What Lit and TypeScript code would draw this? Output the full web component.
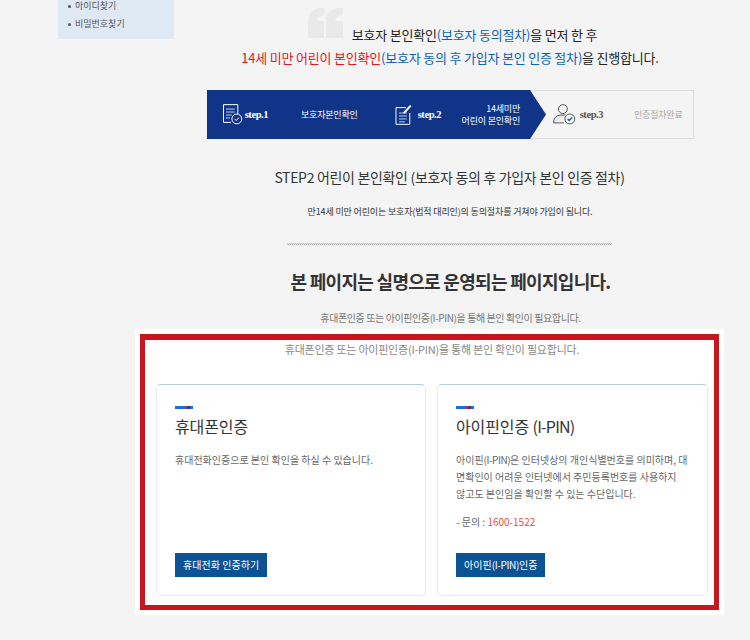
import { LitElement, html, css } from "lit";
import { customElement } from "lit/decorators.js";

@customElement("app-root")
export class AppRoot extends LitElement {
  static styles = css`
    :host {
      display: block;
      height: 640px;
      overflow: hidden;
      background: #f4f4f4;
      font-family: "Noto Sans CJK KR", "Noto Sans", sans-serif;
      color: #333;
    }
    .top { display: flex; padding-left: 58px; height: 329px; }
    .side {
      width: 116px; height: 39px; background: #dfe9f4; box-sizing: border-box;
      margin: 0; padding: 0 0 0 11px; list-style: none; flex: none;
      font-size: 9px; color: #555; line-height: 18px;
    }
    .side li { display: flex; align-items: center; gap: 4px; height: 18px; }
    .side li:first-child { margin-top: -4px; padding-top: 1px; }
    .side i { width: 3px; height: 3px; border-radius: 50%; background: #555; display: block; margin-left: -1px; }
    .main { width: 487px; margin-left: 33px; flex: none; display: flex; flex-direction: column; align-items: center; }
    .intro { font-size: 13px; line-height: 23px; color: #222; text-align: center; margin-top: 23px; white-space: nowrap; letter-spacing: -0.2px; width: 487px; height: 68px; flex: none; padding-right: 1px; box-sizing: border-box; }
    .intro div { height: 23px; }
    .intro .l1 { padding-left: 5px; }
    .q { display: inline-block; width: 35px; height: 23px; margin-right: 9px; position: relative; vertical-align: top; }
    .q svg { position: absolute; left: 0; top: -15px; }
    .blue { color: #0b62b8; }
    .red { color: #e8141c; }
    .steps {
      width: 487px; height: 49px; box-sizing: border-box; border: 1px solid #dcdcdc; margin-top: -1px; flex: none;
      display: flex; align-items: center; position: relative; background: #f4f4f4;
    }
    .bandbg { position: absolute; left: -1px; top: -1px; }
    .stepa { display: flex; align-items: center; flex: none; position: relative; }
    .st { font-family: "Liberation Serif", serif; font-size: 10.5px; font-weight: bold; letter-spacing: -0.45px; }
    .lbl { font-size: 9px; line-height: 12px; white-space: nowrap; letter-spacing: -0.2px; position: relative; flex: none; }
    .white { color: #fff; }
    .s1 { margin-left: 15px; width: 45px; gap: 2px; }
    .s1l { margin-left: 33px; width: 57px; }
    .s2 { margin-left: 37px; width: 46px; gap: 5px; }
    .s2l { width: 79px; text-align: right; }
    .s3 { margin-left: 33px; width: 50px; gap: 4px; color: #555; }
    .s3l { margin-left: 31px; color: #a8a8a8; }
    .title { font-size: 14px; letter-spacing: -0.32px; color: #333; margin-top: 27px; line-height: 22px; white-space: nowrap; padding-right: 2px; }
    .sub { font-size: 9px; color: #333; margin-top: 17px; line-height: 14px; white-space: nowrap; letter-spacing: -0.15px; padding-right: 1px; }
    .wave {
      width: 325px; height: 3px; margin-top: 24px; flex: none; margin-right: 2px;
      background:
        repeating-linear-gradient(90deg, #c4c4c4 0 1px, #e2e2e2 1px 2px) 0 0 / 100% 1px no-repeat,
        repeating-linear-gradient(90deg, #e0e0e0 0 1px, #a4a4a4 1px 2px) 0 1px / 100% 1px no-repeat,
        repeating-linear-gradient(90deg, #e8e8e8 0 1px, #f0f0f0 1px 2px) 0 2px / 100% 1px no-repeat;
    }
    .big { font-size: 18px; font-weight: bold; color: #333; margin-top: 22px; line-height: 26px; white-space: nowrap; letter-spacing: -0.7px; }
    .note { font-size: 10px; color: #777; margin-top: 16px; line-height: 16px; white-space: nowrap; letter-spacing: -0.4px; }
    .panel { margin-left: 135px; width: 589px; height: 286px; background: #fff; padding: 5px; box-sizing: border-box; }
    .frame { height: 100%; border: 5px solid #c8161e; border-top-width: 6px; box-sizing: border-box; padding: 0 6px 0 11px; }
    .cap { font-size: 11px; color: #888; text-align: center; line-height: 16px; margin-top: 1px; white-space: nowrap; letter-spacing: -0.23px; }
    .cards { display: grid; grid-template-columns: 270px 271px; gap: 11px; margin-top: 27px; }
    .card {
      height: 212px; box-sizing: border-box; border: 1px solid #e8ebef; border-top-color: #b9c9dc; border-radius: 5px;
      padding: 21px 18px 18px; display: flex; flex-direction: column; background: #fff;
    }
    .acc { width: 18px; height: 3px; background: linear-gradient(100deg, #1a6fe0 0 58%, #c8202c 58% 72%, #1a3f90 72% 84%, #1a6fe0 84%); }
    h3 { margin: 5px 0 0; font-size: 16px; font-weight: 400; color: #333; line-height: 24px; letter-spacing: -0.1px; white-space: nowrap; }
    h3 span { letter-spacing: -0.8px; }
    .desc { margin: 13px 0 0; font-size: 10px; line-height: 17px; color: #666; white-space: nowrap; }
    .desc span { letter-spacing: -0.45px; }
    .ask { margin: 11px 0 0; font-size: 10px; line-height: 17px; color: #666; }
    .ask b { color: #e2503f; font-weight: 400; }
    .btn {
      margin-top: auto; align-self: flex-start; height: 24px; padding: 0 8px; background: #0b5394; color: #fff;
      font: 10px/24px "Noto Sans CJK KR", sans-serif; border: 0; letter-spacing: 0.05px; box-sizing: border-box;
    }
    .btn span { letter-spacing: -0.35px; }
  `;

  render() {
    return html`
      <div class="top">
        <ul class="side">
          <li><i></i>아이디찾기</li>
          <li><i></i>비밀번호찾기</li>
        </ul>
        <div class="main">
          <div class="intro">
            <div class="l1">
              <span class="q"><svg width="35" height="30" viewBox="0 0 35 30"><path fill="#e9e9e9" d="M0 30V14Q0 3 10 0h6v7q-6 1-7 6h7v17zM18 30V14Q18 3 28 0h7v7q-7 1-8 6h8v17z"/></svg></span>보호자 본인확인<span class="blue">(보호자 동의절차)</span>을 먼저 한 후
            </div>
            <div><span class="red">14세 미만 어린이 본인확인</span><span class="blue">(보호자 동의 후 가입자 본인 인증 절차)</span>을 진행합니다.</div>
          </div>
          <div class="steps">
            <svg class="bandbg" width="340" height="49" viewBox="0 0 340 49"><path fill="#0f3488" d="M0 0H323L339 24.5 323 49H0z"/></svg>
            <div class="stepa s1 white">
              <svg width="20" height="21" viewBox="0 0 20 21" fill="none" stroke="#fff"><path d="M8 18.5H.5V.5H15V10" /><path d="M3 5h9M3 8h9M3 11h6M3 14h4" stroke="#b9d2f2"/><circle cx="14" cy="15" r="5" fill="#0f3488"/><path d="M11.8 15l1.6 1.6 2.8-3"/></svg>
              <span class="st">step.1</span>
            </div>
            <div class="lbl white s1l">보호자본인확인</div>
            <div class="stepa s2 white">
              <svg width="18" height="21" viewBox="0 0 18 21" fill="none" stroke="#fff"><path d="M11 3.5H1v17h14V9"/><path d="M4 9h8M4 12h8M4 15h8M4 18h6" stroke="#b9d2f2"/><path d="M9 9l7-7.5" stroke-width="2"/></svg>
              <span class="st">step.2</span>
            </div>
            <div class="lbl white s2l">14세미만<br />어린이 본인확인</div>
            <div class="stepa s3">
              <svg width="23" height="21" viewBox="0 0 23 21" fill="none" stroke="#555"><circle cx="10" cy="5" r="4.5"/><path d="M.5 19q0-7 7-8h5" fill="#dfe6f0"/><path d="M.5 19H11"/><circle cx="17" cy="15" r="5" fill="#f4f4f4"/><path d="M14.8 15l1.6 1.6 3-3" stroke="#1a56b0" stroke-width="1.4"/></svg>
              <span class="st">step.3</span>
            </div>
            <div class="lbl s3l">인증절차완료</div>
          </div>
          <div class="title">STEP2 어린이 본인확인 (보호자 동의 후 가입자 본인 인증 절차)</div>
          <div class="sub">만14세 미만 어린이는 보호자(법적 대리인)의 동의절차를 거쳐야 가입이 됩니다.</div>
          <div class="wave"></div>
          <div class="big">본 페이지는 실명으로 운영되는 페이지입니다.</div>
          <div class="note">휴대폰인증 또는 아이핀인증(I-PIN)을 통해 본인 확인이 필요합니다.</div>
        </div>
      </div>
      <div class="panel">
        <div class="frame">
          <div class="cap">휴대폰인증 또는 아이핀인증(I-PIN)을 통해 본인 확인이 필요합니다.</div>
          <div class="cards">
            <div class="card">
              <div class="acc"></div>
              <h3>휴대폰인증</h3>
              <p class="desc">휴대전화인증으로 본인 확인을 하실 수 있습니다.</p>
              <button class="btn">휴대전화 인증하기</button>
            </div>
            <div class="card">
              <div class="acc"></div>
              <h3>아이핀인증 <span>(I-PIN)</span></h3>
              <p class="desc">아이핀<span>(I-PIN)</span>은 인터넷상의 개인식별번호를 의미하며, 대<br />면확인이 어려운 인터넷에서 주민등록번호를 사용하지<br />않고도 본인임을 확인할 수 있는 수단입니다.</p>
              <p class="ask">- 문의 : <b>1600-1522</b></p>
              <button class="btn">아이핀<span>(I-PIN)</span>인증</button>
            </div>
          </div>
        </div>
      </div>
    `;
  }
}
